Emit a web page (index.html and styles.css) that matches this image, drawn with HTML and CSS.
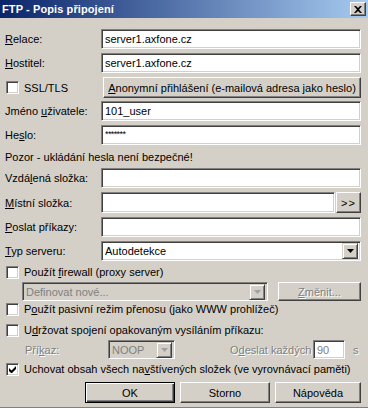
FILE: index.html
```html
<!DOCTYPE html>
<html lang="cs">
  <head>
    <meta charset="UTF-8" />
    <title>FTP - Popis připojení</title>
    <link rel="stylesheet" href="styles.css">
  </head>
  <body>
    <div class="window">
      <div class="titlebar">
        <span class="title">FTP - Popis připojení</span>
        <span class="close-btn">
          <svg width="8" height="7" viewBox="0 0 8 7"><path d="M0 0h2l2 2 2-2h2L5 3.5 8 7H6L4 5 2 7H0l3-3.5z" fill="#000"/></svg>
        </span>
      </div>

      <div class="content">
        <!-- Connection -->
        <div class="row first">
          <label class="lbl"><u>R</u>elace:</label>
          <div class="edit">server1.axfone.cz</div>
        </div>
        <div class="row">
          <label class="lbl"><u>H</u>ostitel:</label>
          <div class="edit">server1.axfone.cz</div>
        </div>
        <div class="row tall">
          <div class="check-wrap lbl">
            <span class="checkbox"></span>
            <span>SSL/TLS</span>
          </div>
          <div class="btn grow"><u>A</u>nonymní přihlášení (e-mailová adresa jako heslo)</div>
        </div>
        <div class="row mt3">
          <label class="lbl">Jméno <u>u</u>živatele:</label>
          <div class="edit">101_user</div>
        </div>
        <div class="row">
          <label class="lbl">He<u>s</u>lo:</label>
          <div class="edit password">*******</div>
        </div>
        <div class="row note">Pozor - ukládání hesla není bezpečné!</div>

        <!-- Folders -->
        <div class="row">
          <label class="lbl">Vzdá<u>l</u>ená složka:</label>
          <div class="edit"></div>
        </div>
        <div class="row tall">
          <label class="lbl"><u>M</u>ístní složka:</label>
          <div class="edit"></div>
          <div class="btn browse">&gt;&gt;</div>
        </div>
        <div class="row">
          <label class="lbl"><u>P</u>oslat příkazy:</label>
          <div class="edit"></div>
        </div>
        <div class="row">
          <label class="lbl"><u>T</u>yp serveru:</label>
          <div class="edit combo">
            <span class="combo-text">Autodetekce</span>
            <span class="drop-btn">
              <svg width="7" height="4" viewBox="0 0 7 4"><path d="M0 0h7L3.5 4z" fill="#000"/></svg>
            </span>
          </div>
        </div>

        <!-- Options -->
        <div class="row check-row">
          <div class="check-wrap">
            <span class="checkbox"></span>
            <span>Použít <u>f</u>irewall (proxy server)</span>
          </div>
        </div>
        <div class="row proxy-row">
          <div class="edit combo disabled proxy-combo">
            <span class="combo-text">Definovat nové...</span>
            <span class="drop-btn">
              <svg width="7" height="4" viewBox="0 0 7 4"><path d="M0 0h7L3.5 4z" fill="#a0a0a0"/></svg>
            </span>
          </div>
          <div class="btn grow disabled-text"><u>Z</u>měnit...</div>
        </div>
        <div class="row check-row mt1">
          <div class="check-wrap">
            <span class="checkbox"></span>
            <span>P<u>o</u>užít pasivní režim přenosu (jako WWW prohlížeč)</span>
          </div>
        </div>
        <div class="row check-row mt7">
          <div class="check-wrap">
            <span class="checkbox"></span>
            <span>U<u>d</u>ržovat spojení opakovaným vysíláním příkazu:</span>
          </div>
        </div>
        <div class="row keepalive-row">
          <label class="cmd-lbl disabled-text">Pří<u>k</u>az:</label>
          <div class="edit combo disabled noop-combo">
            <span class="combo-text">NOOP</span>
            <span class="drop-btn">
              <svg width="7" height="4" viewBox="0 0 7 4"><path d="M0 0h7L3.5 4z" fill="#a0a0a0"/></svg>
            </span>
          </div>
          <label class="send-lbl disabled-text">O<u>d</u>eslat každých</label>
          <div class="edit seconds">90</div>
          <span class="unit disabled-text">s</span>
        </div>
        <div class="row check-row mt3">
          <div class="check-wrap">
            <span class="checkbox">
              <svg width="7" height="7" viewBox="0 0 7 7"><path d="M0 2v3l2 2h1l4-4V0L2.5 4.5z" fill="#000"/></svg>
            </span>
            <span>Uchovat obsah všech na<u>v</u>štívených složek (ve vyrovnávací paměti)</span>
          </div>
        </div>

        <!-- Dialog buttons -->
        <div class="row buttons">
          <div class="btn default">OK</div>
          <div class="btn">Storno</div>
          <div class="btn help">Nápověda</div>
        </div>
      </div>
    </div>
  </body>
</html>
```

FILE: styles.css
```css
body {
  margin: 0;
  padding: 0;
  background-color: #d4d0c8;
  font-family: "Liberation Sans", Arial, sans-serif;
  font-size: 11px;
  color: #000;
}

u {
  text-decoration: underline;
  text-underline-offset: 1px;
}

.window {
  width: 368px;
  height: 408px;
  background-color: #d4d0c8;
  box-sizing: border-box;
  border-bottom: 1px solid #808080;
  overflow: hidden;
}

/* Title bar */
.titlebar {
  height: 18px;
  display: flex;
  align-items: center;
  justify-content: space-between;
  padding: 0 2px 0 2px;
  background: linear-gradient(to right, #0a246a, #a6caf0);
}

.title {
  color: #fff;
  font-weight: bold;
  font-size: 11px;
  letter-spacing: 0.1px;
}

.close-btn {
  width: 16px;
  height: 14px;
  box-sizing: border-box;
  display: flex;
  align-items: center;
  justify-content: center;
  background-color: #d4d0c8;
  border: 1px solid;
  border-color: #fff #404040 #404040 #fff;
  box-shadow: inset -1px -1px #808080;
}

/* Rows */
.content {
  padding: 0 7px 0 5px;
  display: flex;
  flex-direction: column;
}

.row {
  display: flex;
  align-items: center;
  height: 20px;
  margin-top: 4px;
}

.row.first {
  margin-top: 11px;
}

.row.tall {
  height: 21px;
}

.mt1 { margin-top: 1px; }
.mt3 { margin-top: 3px; }
.mt7 { margin-top: 7px; }

.row.note {
  height: 15px;
}

.lbl {
  width: 96px;
  flex-shrink: 0;
}

/* Sunken edit field */
.edit {
  flex: 1;
  height: 100%;
  box-sizing: border-box;
  background-color: #fff;
  border: 1px solid;
  border-color: #808080 #fff #fff #808080;
  box-shadow: inset 1px 1px #404040, inset -1px -1px #d4d0c8;
  padding: 0 3px;
  display: flex;
  align-items: center;
  white-space: nowrap;
}

.password {
  font-size: 9px;
  letter-spacing: -0.6px;
  padding-bottom: 3px;
}

.combo {
  padding: 0 2px 0 3px;
  justify-content: space-between;
}

.combo-text {
  flex: 1;
}

.drop-btn {
  width: 16px;
  height: 16px;
  box-sizing: border-box;
  display: flex;
  align-items: center;
  justify-content: center;
  background-color: #d4d0c8;
  border: 1px solid;
  border-color: #d4d0c8 #404040 #404040 #d4d0c8;
  box-shadow: inset 1px 1px #fff, inset -1px -1px #808080;
}

.combo.disabled {
  background-color: #d4d0c8;
  color: #808080;
}

/* Raised button */
.btn {
  height: 100%;
  box-sizing: border-box;
  display: flex;
  align-items: center;
  justify-content: center;
  background-color: #d4d0c8;
  border: 1px solid;
  border-color: #fff #404040 #404040 #fff;
  box-shadow: inset -1px -1px #808080, inset 1px 1px #d4d0c8;
  white-space: nowrap;
}

.btn.grow {
  flex: 1;
  margin-left: 1px;
}

.btn.browse {
  width: 25px;
  margin-left: 1px;
  letter-spacing: 1px;
}

.disabled-text {
  color: #808080;
  text-shadow: 1px 1px 0 #fff;
}

/* Checkboxes */
.check-row {
  height: 14px;
}

.check-wrap {
  display: flex;
  align-items: center;
  gap: 5px;
  padding-left: 1px;
  white-space: nowrap;
}

.checkbox {
  width: 13px;
  height: 13px;
  box-sizing: border-box;
  flex-shrink: 0;
  background-color: #fff;
  border: 1px solid;
  border-color: #808080 #fff #fff #808080;
  box-shadow: inset 1px 1px #404040, inset -1px -1px #d4d0c8;
  display: flex;
  align-items: center;
  justify-content: center;
}

/* Proxy row */
.proxy-row {
  margin-top: 3px;
  height: 19px;
  padding-left: 17px;
}

.proxy-combo {
  flex: none;
  width: 246px;
  margin-right: 9px;
}

/* Keep-alive row */
.keepalive-row {
  margin-top: 3px;
  height: 19px;
  padding-left: 20px;
}

.cmd-lbl {
  width: 83px;
}

.noop-combo {
  flex: none;
  width: 67px;
}

.send-lbl {
  margin-left: 55px;
  width: 83px;
}

.seconds {
  flex: none;
  width: 32px;
  color: #808080;
}

.unit {
  margin-left: 8px;
}

/* Dialog buttons */
.buttons {
  margin-top: 6px;
  height: 21px;
  justify-content: flex-end;
  gap: 5px;
}

.buttons .btn {
  width: 90px;
}

.buttons .btn.help {
  width: 86px;
}

.btn.default {
  border: 1px solid #000;
  box-shadow: inset 1px 1px #fff, inset -1px -1px #404040, inset -2px -2px #808080;
}
```
